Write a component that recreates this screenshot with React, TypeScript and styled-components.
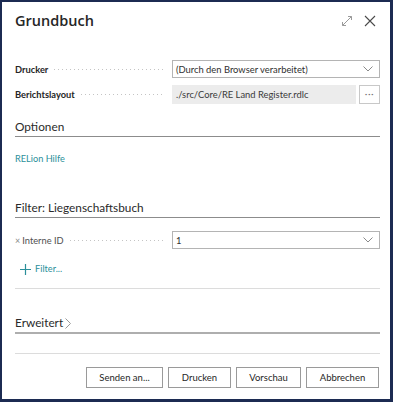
import styled, { createGlobalStyle } from "styled-components";

const GlobalStyle = createGlobalStyle`
  html, body {
    margin: 0;
    padding: 0;
    background: #ffffff;
  }
  body {
    font-family: "Segoe UI", Lato, "Liberation Sans", sans-serif;
    color: #212121;
  }
  * {
    box-sizing: border-box;
  }
`;

const FONT = `"Segoe UI", Lato, "Liberation Sans", sans-serif`;
const TEAL = "#2b8f9a";

const Frame = styled.div`
  width: 393px;
  height: 402px;
  border: solid #1c2b52;
  border-width: 2px 3px 3px 2px;
  padding: 0 10px 0 13px;
  display: flex;
  flex-direction: column;
  font-family: ${FONT};
  background: #fff;
`;

const Header = styled.div`
  margin-top: 9px;
  height: 20px;
  display: flex;
  align-items: center;
  justify-content: space-between;
`;

const Title = styled.h1`
  margin: 0;
  font-family: "Segoe UI", "Open Sans", sans-serif;
  font-size: 14.5px;
  line-height: 20px;
  font-weight: 600;
  color: #262626;
`;

const HeaderIcons = styled.div`
  display: flex;
  align-items: center;
  gap: 11px;
  margin-right: 4px;
`;

const Fields = styled.div<{ $top: number }>`
  margin-top: ${({ $top }) => $top}px;
  display: flex;
  flex-direction: column;
  gap: 7px;
`;

const Row = styled.div`
  display: flex;
  align-items: center;
  height: 18px;
`;

const LabelCell = styled.div`
  width: 157px;
  display: flex;
  align-items: center;
  padding-right: 7px;
  height: 100%;
`;

const Label = styled.span<{ $plain?: boolean }>`
  font-size: 9.3px;
  font-weight: ${({ $plain }) => ($plain ? 400 : 700)};
  color: ${({ $plain }) => ($plain ? "#505050" : "#262626")};
  white-space: nowrap;
  display: flex;
  align-items: center;
  gap: 2px;
`;

const RemoveMark = styled.span`
  color: #8a8a8a;
  font-size: 9px;
  line-height: 1;
`;

const Leader = styled.span`
  flex: 1;
  height: 1px;
  margin-left: 6px;
  background-image: linear-gradient(to right, #c4c4c4 1px, transparent 1px);
  background-size: 4px 1px;
  background-repeat: repeat-x;
`;

const SelectBox = styled.div`
  flex: 1;
  height: 18px;
  border: 1px solid #b4b4b4;
  display: flex;
  align-items: center;
  justify-content: space-between;
  padding: 0 6px 0 3px;
  font-size: 9.4px;
  color: #303030;
  background: #fff;
`;

const ReadOnlyBox = styled.div`
  flex: 1;
  height: 19px;
  background: #ececec;
  display: flex;
  align-items: center;
  padding: 0 4px;
  font-size: 9.4px;
  color: #3a3a3a;
`;

const DotsButton = styled.div`
  width: 21px;
  height: 19px;
  margin-left: 3px;
  border: 1px solid #c8c8c8;
  display: flex;
  align-items: center;
  justify-content: center;
  color: #777;
  font-size: 10px;
  letter-spacing: 0.5px;
  padding-bottom: 3px;
`;

const SectionTitle = styled.h2<{ $top: number; $thick?: boolean }>`
  margin: ${({ $top }) => $top}px 0 0;
  font-size: 11.8px;
  line-height: 18px;
  font-weight: 400;
  color: #2a2a2a;
  border-bottom: ${({ $thick }) => ($thick ? "2px solid #aeaeae" : "1px solid #8c8c8c")};
  display: flex;
  align-items: center;
`;

const Chevron = styled.span`
  display: inline-flex;
  margin-left: 2px;
`;

const Link = styled.div<{ $top: number }>`
  margin-top: ${({ $top }) => $top}px;
  font-size: 9.2px;
  line-height: 14px;
  color: ${TEAL};
  display: flex;
  align-items: center;
  gap: 4px;
`;

const AddFilter = styled(Link)`
  padding-left: 5px;
`;

const Divider = styled.div<{ $top: number }>`
  margin-top: ${({ $top }) => $top}px;
  height: 1px;
  background: #dcdcdc;
`;

const Footer = styled.div`
  margin-top: 13px;
  display: flex;
  justify-content: flex-end;
  gap: 5px;
  padding-right: 1px;
`;

const Button = styled.button<{ $w: number }>`
  width: ${({ $w }) => $w}px;
  height: 21px;
  border: 1px solid #9a9a9a;
  background: #fff;
  font-family: ${FONT};
  font-size: 9.5px;
  color: #262626;
  padding: 0;
  display: flex;
  align-items: center;
  justify-content: center;
`;

const ExpandIcon = () => (
  <svg width="12" height="12" viewBox="0 0 12 12" fill="none" stroke="#9a9a9a" strokeWidth="1">
    <path d="M1.5 10.5 L10.5 1.5 M7 1.5 H10.5 V5 M1.5 7 V10.5 H5" />
  </svg>
);

const CloseIcon = () => (
  <svg width="12" height="12" viewBox="0 0 12 12" fill="none" stroke="#4a4a4a" strokeWidth="1.1">
    <path d="M1 1 L11 11 M11 1 L1 11" />
  </svg>
);

const DownChevron = () => (
  <svg width="10" height="6" viewBox="0 0 10 6" fill="none" stroke="#8a8a8a" strokeWidth="1">
    <path d="M0.5 0.5 L5 5 L9.5 0.5" />
  </svg>
);

const RightChevron = () => (
  <svg width="6" height="11" viewBox="0 0 6 11" fill="none" stroke="#9a9a9a" strokeWidth="1">
    <path d="M0.5 0.5 L5.5 5.5 L0.5 10.5" />
  </svg>
);

const PlusIcon = () => (
  <svg width="11" height="11" viewBox="0 0 11 11" fill="none" stroke={TEAL} strokeWidth="1.2">
    <path d="M5.5 0 V11 M0 5.5 H11" />
  </svg>
);

const buttons = [
  { text: "Senden an...", w: 77 },
  { text: "Drucken", w: 63 },
  { text: "Vorschau", w: 65 },
  { text: "Abbrechen", w: 73 },
];

export default function App() {
  return (
    <>
      <GlobalStyle />
      <Frame>
        <Header>
          <Title>Grundbuch</Title>
          <HeaderIcons>
            <ExpandIcon />
            <CloseIcon />
          </HeaderIcons>
        </Header>

        <Fields $top={29}>
          <Row>
            <LabelCell>
              <Label>Drucker</Label>
              <Leader />
            </LabelCell>
            <SelectBox>
              <span>(Durch den Browser verarbeitet)</span>
              <DownChevron />
            </SelectBox>
          </Row>
          <Row>
            <LabelCell>
              <Label>Berichtslayout</Label>
              <Leader />
            </LabelCell>
            <ReadOnlyBox>./src/Core/RE Land Register.rdlc</ReadOnlyBox>
            <DotsButton>···</DotsButton>
          </Row>
        </Fields>

        <SectionTitle $top={15}>Optionen</SectionTitle>
        <Link $top={15}>RELion Hilfe</Link>

        <SectionTitle $top={33}>Filter: Liegenschaftsbuch</SectionTitle>
        <Fields $top={13}>
          <Row>
            <LabelCell>
              <Label $plain>
                <RemoveMark>×</RemoveMark>
                Interne ID
              </Label>
              <Leader />
            </LabelCell>
            <SelectBox>
              <span>1</span>
              <DownChevron />
            </SelectBox>
          </Row>
        </Fields>
        <AddFilter $top={13}>
          <PlusIcon />
          Filter...
        </AddFilter>
        <Divider $top={12} />

        <SectionTitle $top={25} $thick>
          Erweitert
          <Chevron>
            <RightChevron />
          </Chevron>
        </SectionTitle>
        <Divider $top={19} />

        <Footer>
          {buttons.map((b) => (
            <Button key={b.text} $w={b.w}>
              {b.text}
            </Button>
          ))}
        </Footer>
      </Frame>
    </>
  );
}
